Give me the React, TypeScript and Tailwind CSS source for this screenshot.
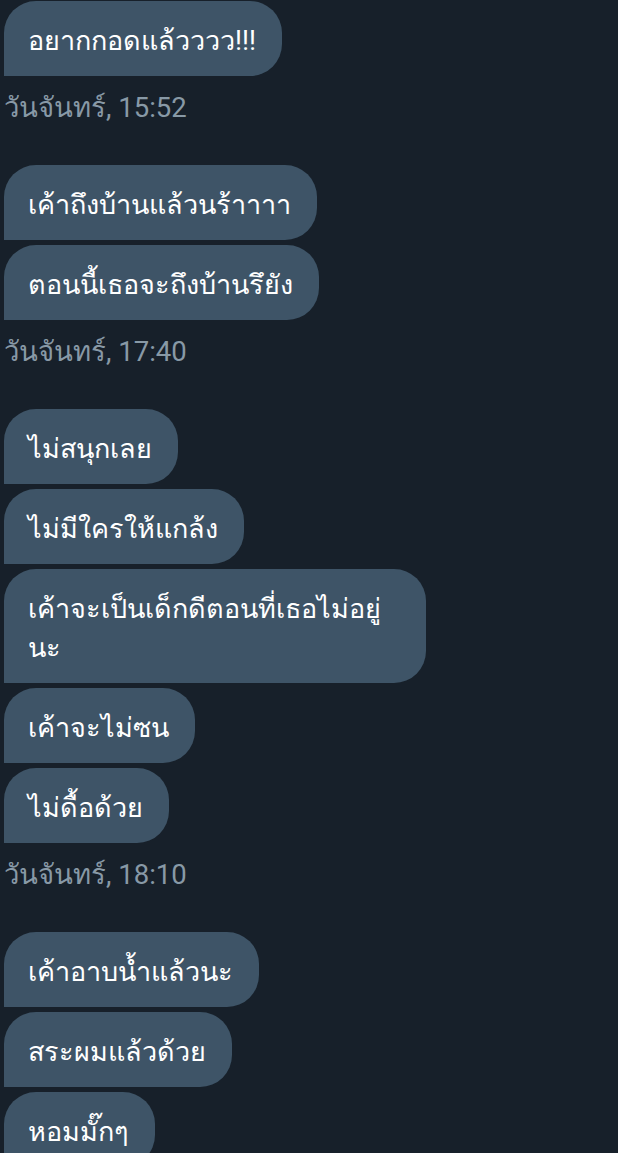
import React from 'react';

type Group = { messages: string[]; time?: string };

const groups: Group[] = [
  { messages: ['อยากกอดแล้วววว!!!'], time: 'วันจันทร์, 15:52' },
  { messages: ['เค้าถึงบ้านแล้วนร้าาาา', 'ตอนนี้เธอจะถึงบ้านรึยัง'], time: 'วันจันทร์, 17:40' },
  {
    messages: [
      'ไม่สนุกเลย',
      'ไม่มีใครให้แกล้ง',
      'เค้าจะเป็นเด็กดีตอนที่เธอไม่อยู่นะ',
      'เค้าจะไม่ซน',
      'ไม่ดื้อด้วย',
    ],
    time: 'วันจันทร์, 18:10',
  },
  { messages: ['เค้าอาบน้ำแล้วนะ', 'สระผมแล้วด้วย', 'หอมมั๊กๆ'] },
];

const Bubble = ({ text }: { text: string }) => (
  <div className="self-start max-w-[422px] bg-[#3e5467] text-white rounded-[32px] rounded-bl-none pl-6 pr-[26px] pt-[21px] pb-[15px] text-[27px] leading-[39px]">
    {text}
  </div>
);

export default function App() {
  return (
    <div
      className="w-[618px] h-[1153px] overflow-hidden bg-[#17202a] pl-1 pt-px"
      style={{ fontFamily: 'Roboto, "Noto Sans", "DejaVu Sans", sans-serif' }}
    >
      {groups.map((g, i) => (
        <div key={i} className="flex flex-col">
          <div className="flex flex-col gap-[5px]">
            {g.messages.map((m, j) => (
              <Bubble key={j} text={m} />
            ))}
          </div>
          {g.time && (
            <div className="mt-[14px] mb-[39px] text-[27.5px] leading-[36px] text-[#8899a6]">
              {g.time}
            </div>
          )}
        </div>
      ))}
    </div>
  );
}
